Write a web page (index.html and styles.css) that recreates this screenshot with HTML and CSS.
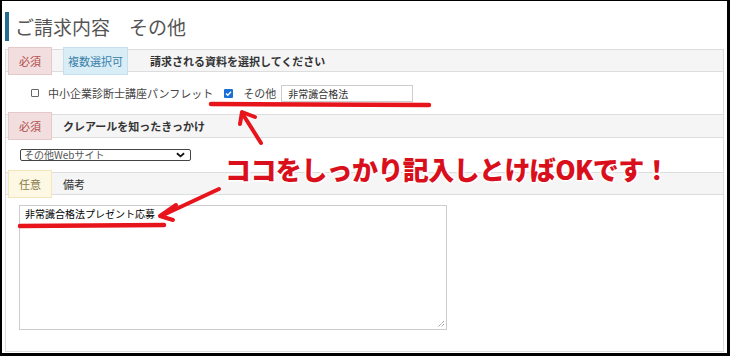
FILE: index.html
```html
<!DOCTYPE html>
<html lang="ja">
<head>
<meta charset="utf-8">
<link rel="stylesheet" href="styles.css">
</head>
<body>
<div class="frame">
  <h1 class="title">ご請求内容　その他</h1>
  <div class="panel">
    <div class="band">
      <span class="badge req">必須</span>
      <span class="badge multi">複数選択可</span>
      <span class="band-label">請求される資料を選択してください</span>
    </div>
    <div class="row row-check">
      <span class="cb"></span>
      <span class="opt">中小企業診断士講座パンフレット</span>
      <span class="cb on"><svg viewBox="0 0 9 9" width="9" height="9"><path d="M2 4.6 L3.8 6.3 L7 2.8" fill="none" stroke="#fff" stroke-width="1.4"/></svg></span>
      <span class="opt opt-other">その他</span>
      <span class="txt">非常識合格法</span>
    </div>
    <div class="band band2">
      <span class="badge req">必須</span>
      <span class="band-label first">クレアールを知ったきっかけ</span>
    </div>
    <div class="row row-select">
      <span class="select">その他Webサイト<svg class="chev" viewBox="0 0 10 6" width="9" height="6"><path d="M1 1 L5 4.5 L9 1" fill="none" stroke="#111" stroke-width="2"/></svg></span>
    </div>
    <div class="band band3">
      <span class="badge opt-badge">任意</span>
      <span class="band-label first normal">備考</span>
    </div>
    <div class="row row-area">
      <div class="area">非常識合格法プレゼント応募
        <svg class="grip" viewBox="0 0 10 10" width="10" height="10"><path d="M9 3 L3 9 M9 6 L6 9" stroke="#777" stroke-width="1" stroke-dasharray="1 1"/></svg>
      </div>
    </div>
  </div>

  <svg class="marks" viewBox="0 0 730 356" width="730" height="356">
    <g stroke="#e8141c" stroke-linecap="round" fill="none">
      <line x1="211" y1="104" x2="429" y2="105" stroke-width="4.5"/>
      <line x1="261" y1="143" x2="242" y2="113" stroke-width="4"/>
      <polyline points="240,124 242,112 255,117" stroke-width="4" stroke-linejoin="round"/>
      <line x1="20" y1="226" x2="164" y2="225" stroke-width="4.5"/>
      <line x1="219" y1="189" x2="161" y2="216" stroke-width="4"/>
      <polyline points="176,205 160,216 173,220" stroke-width="4" stroke-linejoin="round"/>
    </g>
  </svg>
  <div class="note">ココをしっかり記入しとけばOKです！</div>
</div>
</body>
</html>
```

FILE: styles.css
```css
* { box-sizing: border-box; }
html, body { margin: 0; padding: 0; background: #fff; }
body {
  width: 730px;
  height: 356px;
  font-family: "Noto Sans CJK JP", "Noto Sans", sans-serif;
  color: #333;
}
.frame {
  position: relative;
  width: 730px;
  height: 356px;
  border-style: solid;
  border-color: #000;
  border-width: 1px 3px 3px 2px;
  overflow: hidden;
}
.title {
  margin: 11px 0 0 3px;
  height: 29px;
  border-left: 4px solid #236b8e;
  padding-left: 6px;
  font-size: 19px;
  line-height: 29px;
  font-weight: 400;
  color: #555;
}
.panel {
  margin: 8px 0 0 3px;
  width: 719px;
  height: 303px;
  border: 1px solid #ddd;
  border-top: 0;
}
.band {
  display: flex;
  align-items: center;
  height: 23px;
  background: #f5f5f5;
  border-top: 1px solid #ddd;
  border-bottom: 1px solid #ddd;
  padding-left: 2px;
}
.badge {
  display: block;
  height: 28px;
  line-height: 26px;
  font-size: 11px;
  padding: 0 10px;
  border: 1px solid;
  flex: none;
}
.req { background: #f2dede; border-color: #e8c9c9; color: #b04a48; }
.multi { background: #d9edf7; border-color: #c4e0ee; color: #3a7fa8; margin-left: 11px; padding: 0 4px; }
.opt-badge { background: #fcf8e3; border-color: #f0e6b8; color: #8a7a4b; }
.band-label {
  margin-left: 22px;
  font-size: 11px;
  font-weight: 700;
  color: #333;
}
.band-label.first { margin-left: 11px; }
.band-label.normal { font-weight: 400; }
.row { display: flex; align-items: center; }
.row-check {
  height: 42px;
  padding-left: 25px;
  font-size: 11px;
  color: #444;
}
.cb {
  display: block;
  width: 8px;
  height: 8px;
  border: 1px solid #666;
  border-radius: 1px;
  background: #fff;
  flex: none;
}
.cb.on {
  width: 9px;
  height: 9px;
  border: 0;
  background: #1a6fd6;
  margin-left: 11px;
}
.cb.on svg { display: block; }
.opt { margin-left: 9px; line-height: 16px; }
.opt-other { margin-left: 10px; }
.txt {
  margin-left: 5px;
  width: 132px;
  height: 17px;
  border: 1px solid #ccc;
  font-size: 10px;
  line-height: 15px;
  padding-left: 6px;
  color: #333;
}
.row-select {
  height: 34px;
  padding-left: 14px;
}
.select {
  position: relative;
  display: block;
  width: 171px;
  height: 12px;
  border: 1px solid #444;
  border-radius: 2px;
  font-size: 10px;
  line-height: 10px;
  padding-left: 3px;
  color: #555;
}
.chev { position: absolute; right: 5px; top: 2px; }
.band2 { height: 24px; }
.band3 { height: 23px; }
.row-area {
  align-items: flex-start;
  padding: 10px 0 0 13px;
}
.area {
  position: relative;
  width: 428px;
  height: 125px;
  border: 1px solid #ccc;
  font-size: 10px;
  line-height: 14px;
  padding: 1px 0 0 5px;
  color: #000;
}
.grip { position: absolute; right: 1px; bottom: 1px; }
.marks {
  position: absolute;
  left: -2px;
  top: -1px;
  pointer-events: none;
}
.note {
  position: absolute;
  left: 223px;
  top: 148px;
  font-size: 26px;
  line-height: 40px;
  font-weight: 900;
  color: #d9101b;
  letter-spacing: -0.6px;
  -webkit-text-stroke: 3px #fff;
  paint-order: stroke fill;
  white-space: nowrap;
}
```
